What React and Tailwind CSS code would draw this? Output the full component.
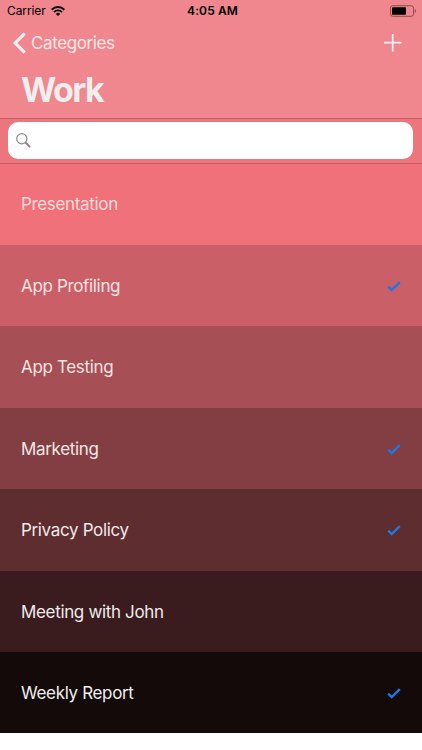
const items = [
  { title: "Presentation", done: false, color: "bg-[#f0717a]", text: "text-[#fcdcdc]" },
  { title: "App Profiling", done: true, color: "bg-[#ca5f68]", text: "text-[#fbe3e1]" },
  { title: "App Testing", done: false, color: "bg-[#a64f55]", text: "text-[#f7e3e0]" },
  { title: "Marketing", done: true, color: "bg-[#823e43]", text: "text-[#f4e8e6]" },
  { title: "Privacy Policy", done: true, color: "bg-[#5d2d30]", text: "text-[#f2e9e8]" },
  { title: "Meeting with John", done: false, color: "bg-[#3a1c1e]", text: "text-[#f0ebeb]" },
  { title: "Weekly Report", done: true, color: "bg-[#140a0a]", text: "text-[#f0eeee]" },
];

function StatusBar() {
  return (
    <div className="grid grid-cols-3 items-center h-[22px] pl-[7px] pr-[4px] text-black">
      <div className="flex items-center gap-[5px]">
        <span className="text-[12px] tracking-[-0.1px]">Carrier</span>
        <svg className="w-[14px] h-[10px]" viewBox="0 0 14 10" fill="none" stroke="currentColor">
          <path d="M0.7 3.7a8.9 8.9 0 0 1 12.6 0" strokeWidth="2" />
          <path d="M3 6.1a5.7 5.7 0 0 1 8 0" strokeWidth="1.8" />
          <path d="M7 10L4.9 7.9a3 3 0 0 1 4.2 0z" fill="currentColor" stroke="none" />
        </svg>
      </div>
      <span className="text-center text-[12px] font-semibold tracking-[0.1px] whitespace-nowrap">
        4:05 AM
      </span>
      <svg className="justify-self-end w-[26px] h-[12px] mr-[2px]" viewBox="0 0 26 12">
        <rect x="0.5" y="0.7" width="23" height="10.6" rx="2.4" fill="none" stroke="#8c4d52" />
        <rect x="2" y="2.2" width="14" height="7.6" rx="0.8" fill="black" />
        <path d="M24.8 4v4q1.2-.7 1.2-2t-1.2-2z" fill="#8c4d52" />
      </svg>
    </div>
  );
}

function NavBar() {
  return (
    <div className="flex flex-col h-[96px]">
      <div className="flex items-center justify-between h-[42px] pl-[13px] pr-[20px]">
        <button className="flex items-center gap-[5px] text-[#fbe6e7]">
          <svg className="w-[13px] h-[22px]" viewBox="0 0 13 22" fill="none">
            <path d="M11.7 1.3L2.2 11l9.5 9.7" stroke="#f6efef" strokeWidth="3.2" />
          </svg>
          <span className="pt-px text-[17px] leading-none tracking-[-0.4px]">Categories</span>
        </button>
        <svg className="w-[18px] h-[18px]" viewBox="0 0 18 18" stroke="#faf0f0" strokeWidth="1.7">
          <path d="M8.7 0v17.5M0 8.7h17.5" />
        </svg>
      </div>
      <h1 className="pl-[21px] pt-[4px] text-[34px] leading-[44px] font-bold tracking-[-1.6px] text-[#f1eeee]">
        Work
      </h1>
    </div>
  );
}

function SearchBar() {
  return (
    <div className="h-[45.5px] pt-[3px] pl-[8px] pr-[9px] bg-[#ec757e] border-y border-[#c35d65]">
      <div className="flex items-center h-[37px] pl-[8px] rounded-[10px] bg-white">
        <svg className="w-[15px] h-[15px]" viewBox="0 0 15 15" fill="none" stroke="#8b898a">
          <circle cx="5.8" cy="5.8" r="5.1" strokeWidth="1.2" />
          <path d="M9.5 9.5l4.7 4.7" strokeWidth="1.8" />
        </svg>
      </div>
    </div>
  );
}

function Item({ item }) {
  return (
    <li className={`flex items-center justify-between h-[81.45px] pl-[21px] pr-[21px] ${item.color}`}>
      <span className={`pt-[2px] text-[17px] tracking-[-0.34px] ${item.text}`}>{item.title}</span>
      {item.done && (
        <svg className="w-[14px] h-[11px] mt-[2px]" viewBox="0 0 14 11" fill="none">
          <path d="M1.2 5.7l3.5 3.3L12.8 1.2" stroke="#1c78e6" strokeWidth="2.4" />
        </svg>
      )}
    </li>
  );
}

export default function App() {
  return (
    <div className="w-full h-[750px] overflow-hidden bg-white font-['Inter','Liberation_Sans',sans-serif]">
      <header className="bg-[#f0868e]">
        <StatusBar />
        <NavBar />
      </header>
      <SearchBar />
      <ul className="h-[569.5px] overflow-hidden">
        {items.map((item) => (
          <Item key={item.title} item={item} />
        ))}
      </ul>
    </div>
  );
}
